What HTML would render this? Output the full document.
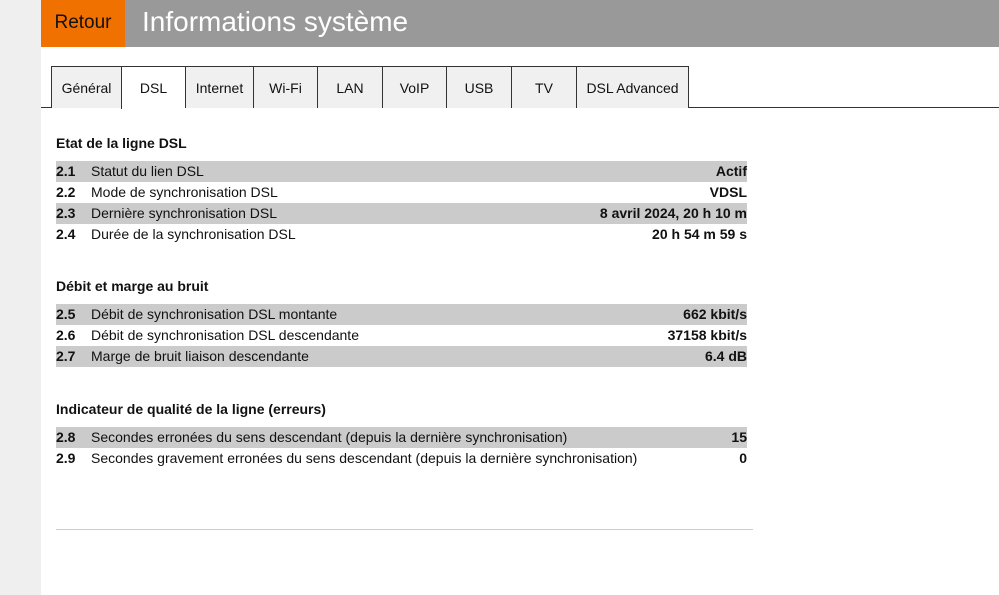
<!DOCTYPE html>
<html><head><meta charset="utf-8"><style>
*{margin:0;padding:0;box-sizing:border-box}
body{width:999px;height:595px;background:#fff;font-family:"Liberation Sans",Arial,sans-serif;position:relative;overflow:hidden;color:#111}
#side{position:absolute;left:0;top:0;width:41px;height:595px;background:#efefef}
#hdr{position:absolute;left:41px;top:0;width:958px;height:47px;background:#999}
#ret{position:absolute;left:0;top:0;width:84px;height:47px;background:#f07000;color:#111;font-size:19px;line-height:46px;text-align:center}
#ttl{position:absolute;left:101px;top:0;color:#fff;font-size:28px;line-height:44px}
.tab{position:absolute;top:66px;height:42px;background:#f0f0f0;border:1px solid #333;border-bottom:none;border-right:none;font-size:14px;text-align:center;line-height:42px}
.tab.act{background:#fff;height:43px}
#tl1{position:absolute;left:41px;top:107px;width:11px;height:1px;background:#333}
#tl2{position:absolute;left:688px;top:107px;width:311px;height:1px;background:#333}
h3{position:absolute;left:56px;font-size:14px;font-weight:bold}
.row{position:absolute;left:56px;width:691px;height:21px;font-size:14px;line-height:21px}
.g{background:#cbcbcb}
.row b{position:absolute;left:0}
.row span{position:absolute;left:35px}
.row i{position:absolute;right:0;font-style:normal;font-weight:bold}
#hr{position:absolute;left:56px;top:529px;width:697px;height:1px;background:#ccc}
</style></head><body>
<div id="side"></div>
<div id="hdr"><div id="ret">Retour</div><div id="ttl">Informations système</div></div>
<div class="tab" style="left:51px;width:70px">Général</div>
<div class="tab act" style="left:121px;width:64px">DSL</div>
<div class="tab" style="left:185px;width:68px">Internet</div>
<div class="tab" style="left:253px;width:64px">Wi-Fi</div>
<div class="tab" style="left:317px;width:65px">LAN</div>
<div class="tab" style="left:382px;width:64px">VoIP</div>
<div class="tab" style="left:446px;width:65px">USB</div>
<div class="tab" style="left:511px;width:65px">TV</div>
<div class="tab" style="left:576px;width:113px;border-right:1px solid #333">DSL Advanced</div>
<div id="tl1"></div><div id="tl2"></div>
<h3 style="top:135px">Etat de la ligne DSL</h3>
<div class="row g" style="top:161px"><b>2.1</b><span>Statut du lien DSL</span><i>Actif</i></div>
<div class="row" style="top:182px"><b>2.2</b><span>Mode de synchronisation DSL</span><i>VDSL</i></div>
<div class="row g" style="top:203px"><b>2.3</b><span>Dernière synchronisation DSL</span><i>8 avril 2024, 20 h 10 m</i></div>
<div class="row" style="top:224px"><b>2.4</b><span>Durée de la synchronisation DSL</span><i>20 h 54 m 59 s</i></div>
<h3 style="top:278px">Débit et marge au bruit</h3>
<div class="row g" style="top:304px"><b>2.5</b><span>Débit de synchronisation DSL montante</span><i>662 kbit/s</i></div>
<div class="row" style="top:325px"><b>2.6</b><span>Débit de synchronisation DSL descendante</span><i>37158 kbit/s</i></div>
<div class="row g" style="top:346px"><b>2.7</b><span>Marge de bruit liaison descendante</span><i>6.4 dB</i></div>
<h3 style="top:401px">Indicateur de qualité de la ligne (erreurs)</h3>
<div class="row g" style="top:427px"><b>2.8</b><span>Secondes erronées du sens descendant (depuis la dernière synchronisation)</span><i>15</i></div>
<div class="row" style="top:448px"><b>2.9</b><span>Secondes gravement erronées du sens descendant (depuis la dernière synchronisation)</span><i>0</i></div>
<div id="hr"></div>
</body></html>
